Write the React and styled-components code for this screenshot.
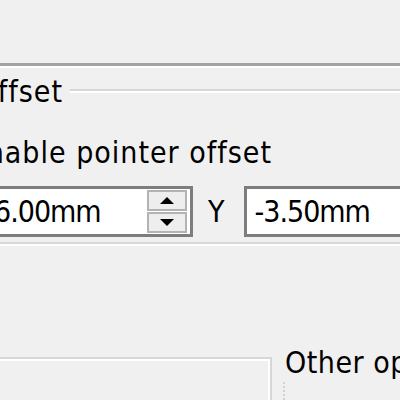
import React from 'react';
import styled, { createGlobalStyle } from 'styled-components';

const GlobalStyle = createGlobalStyle`
    html, body {
        margin: 0;
        padding: 0;
        background: #f0f0f0;
    }
`;

const Screen = styled.div`
    width: 400px;
    height: 400px;
    overflow: hidden;
    background: #f0f0f0;
    color: #000;
    font-family: "DejaVu Sans", "Liberation Sans", sans-serif;
    font-stretch: condensed;
    font-size: 30px;
    letter-spacing: 1px;
    display: flex;
    flex-direction: column;
`;

const TabEdge = styled.div`
    margin-top: 63px;
    height: 3px;
    background: #a3a3a3;
    border-bottom: 2px solid #ffffff;
`;

const GroupBox = styled.section`
    margin-top: 9px;
    padding-bottom: 5px;
    border-bottom: 2px solid #d7d7d7;
    box-shadow: 0 2px 0 #ffffff;
`;

const GroupHeader = styled.div`
    display: flex;
    align-items: center;
    height: 28px;
`;

const RightEdge = styled.div`
    width: ${p => p.$w}px;
    flex-shrink: 0;
    display: flex;
    justify-content: flex-end;
    align-items: center;
    white-space: nowrap;
`;

const HeaderLine = styled.div`
    flex: 1;
    margin-left: 7px;
    height: 2px;
    background: #d7d7d7;
    border-bottom: 2px solid #ffffff;
`;

const CheckRow = styled.div`
    display: flex;
    margin-top: 30px;
    height: 36px;
    line-height: 36px;
`;

const CheckBox = styled.span`
    width: 30px;
    height: 30px;
    margin-right: 12px;
    border: 3px solid #7a7a7a;
    background: #fff;
    box-sizing: border-box;
`;

const FieldRow = styled.div`
    display: flex;
    align-items: center;
    margin-top: 15px;
    height: 51px;
`;

const Label = styled.span`
    margin: 0 ${p => p.$right || 20}px 0 ${p => p.$left || 0}px;
    line-height: 1;
    letter-spacing: 0;
`;

const NumberBox = styled.div`
    display: flex;
    align-items: center;
    height: 51px;
    width: ${p => p.$w}px;
    flex-shrink: 0;
    box-sizing: border-box;
    border: 3px solid #7d7d7d;
    background: #ffffff;
    padding-left: 7px;
`;

const Value = styled.span`
    flex: 1;
    white-space: nowrap;
    letter-spacing: -1px;
`;

const Spinner = styled.div`
    align-self: stretch;
    width: 40px;
    display: flex;
    flex-direction: column;
    margin: 1px 3px 1px 0;
`;

const SpinButton = styled.div`
    flex: 1;
    display: flex;
    align-items: center;
    justify-content: center;
    background: #eeeeee;
    border: 2px solid #b3b3b3;
    & + & {
        margin-top: 1px;
    }
`;

const Arrow = styled.span`
    width: 0;
    height: 0;
    border-left: 7px solid transparent;
    border-right: 7px solid transparent;
    ${p => p.$down
        ? 'border-top: 7px solid #000;'
        : 'border-bottom: 7px solid #000;'}
`;

const BottomRow = styled.div`
    display: flex;
    margin-top: 100px;
    flex: 1;
`;

const LeftGroup = styled.div`
    width: 270px;
    flex-shrink: 0;
    margin-top: 13px;
    border-top: 2px solid #d7d7d7;
    border-right: 2px solid #d7d7d7;
    box-shadow: inset 0 2px 0 #ffffff, inset -2px 0 0 #ffffff;
`;

const RightGroup = styled.div`
    margin-left: 11px;
    display: flex;
    flex-direction: column;
`;

const Legend = styled.div`
    white-space: nowrap;
    line-height: 30px;
    padding: 4px 0 0 2px;
    letter-spacing: 0.5px;
`;

const DashedEdge = styled.div`
    flex: 1;
    width: 0;
    margin-top: 4px;
    border-left: 2px dotted #d0d0d0;
`;

const App = () => {
    return (
        <Screen>
            <GlobalStyle />
            <TabEdge />
            <GroupBox>
                <GroupHeader>
                    <RightEdge $w={63}>Pointer offset</RightEdge>
                    <HeaderLine />
                </GroupHeader>
                <CheckRow>
                    <RightEdge $w={272}>
                        <CheckBox />
                        Enable pointer offset
                    </RightEdge>
                </CheckRow>
                <FieldRow>
                    <RightEdge $w={193}>
                        <Label>X</Label>
                        <NumberBox $w={209}>
                            <Value>6.00mm</Value>
                            <Spinner>
                                <SpinButton><Arrow /></SpinButton>
                                <SpinButton><Arrow $down /></SpinButton>
                            </Spinner>
                        </NumberBox>
                    </RightEdge>
                    <Label $left={15} $right={20}>Y</Label>
                    <NumberBox $w={260}>
                        <Value>-3.50mm</Value>
                    </NumberBox>
                </FieldRow>
            </GroupBox>
            <BottomRow>
                <LeftGroup />
                <RightGroup>
                    <Legend>Other options</Legend>
                    <DashedEdge />
                </RightGroup>
            </BottomRow>
        </Screen>
    );
};

export default App;
